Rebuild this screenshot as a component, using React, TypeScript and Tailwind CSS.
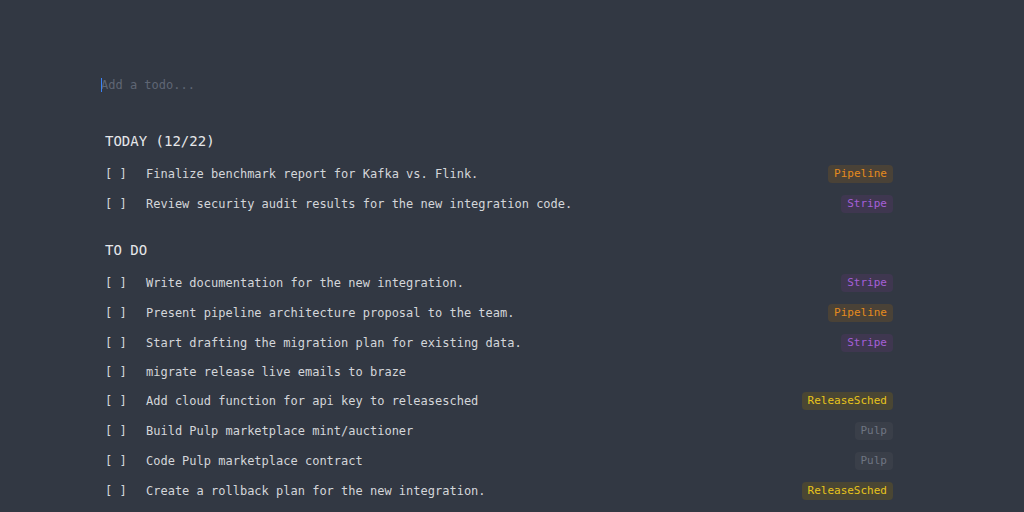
import React from "react";

type Tag = "Pipeline" | "Stripe" | "ReleaseSched" | "Pulp";

type Todo = { text: string; tag?: Tag };

const tagStyles: Record<Tag, string> = {
  Pipeline: "text-[#e58b1e] bg-[#4a4237]",
  Stripe: "text-[#a55fd8] bg-[#3f3750]",
  ReleaseSched: "text-[#e8c41c] bg-[#4a4633]",
  Pulp: "text-[#6f7582] bg-[#3a3f49]",
};

const today: Todo[] = [
  { text: "Finalize benchmark report for Kafka vs. Flink.", tag: "Pipeline" },
  { text: "Review security audit results for the new integration code.", tag: "Stripe" },
];

// last row only peeks in at the bottom edge (its tag is all that shows)
const todo: Todo[] = [
  { text: "Write documentation for the new integration.", tag: "Stripe" },
  { text: "Present pipeline architecture proposal to the team.", tag: "Pipeline" },
  { text: "Start drafting the migration plan for existing data.", tag: "Stripe" },
  { text: "migrate release live emails to braze" },
  { text: "Add cloud function for api key to releasesched", tag: "ReleaseSched" },
  { text: "Build Pulp marketplace mint/auctioner", tag: "Pulp" },
  { text: "Code Pulp marketplace contract", tag: "Pulp" },
  { text: "Create a rollback plan for the new integration.", tag: "ReleaseSched" },
  { text: "", tag: "Pipeline" },
];

function TodoRow({ item }: { item: Todo }) {
  return (
    <div className="flex items-center py-[6px]">
      <span className="w-[41px] shrink-0 text-[12px] leading-[16px] text-[#d4d6da]">
        {item.text ? "[ ]" : ""}
      </span>
      <span className="flex-1 text-[12px] leading-[16px] text-[#d4d6da] whitespace-nowrap">
        {item.text}
      </span>
      {item.tag && (
        <span
          className={`h-[18px] px-[6px] rounded-[4px] text-[11px] leading-[18px] font-medium ${tagStyles[item.tag]}`}
        >
          {item.tag}
        </span>
      )}
    </div>
  );
}

function Section({ title, items }: { title: string; items: Todo[] }) {
  return (
    <section className="pl-[4px]">
      <h2 className="text-[14px] leading-[20px] text-[#e6e7ea] mb-[8px]">{title}</h2>
      <div className="flex flex-col">
        {items.map((item, i) => (
          <TodoRow key={i} item={item} />
        ))}
      </div>
    </section>
  );
}

export default function App() {
  return (
    <div
      className="h-[512px] overflow-hidden bg-[#323843] pt-[75px] pl-[101px] pr-[131px]"
      style={{ fontFamily: '"DejaVu Sans Mono", "Liberation Mono", monospace' }}
    >
      <div className="relative">
        <input
          autoFocus
          placeholder="Add a todo..."
          className="block w-full h-[20px] bg-transparent text-[12px] leading-[20px] text-[#d4d6da] placeholder:text-[#5f6674] caret-[#3b82f6] focus:outline-none"
        />
        <span className="absolute left-0 top-[3px] w-px h-[14px] bg-[#3b82f6]" />
      </div>
      <div className="mt-[36px] flex flex-col gap-[21px]">
        <Section title="TODAY (12/22)" items={today} />
        <Section title="TO DO" items={todo} />
      </div>
    </div>
  );
}
